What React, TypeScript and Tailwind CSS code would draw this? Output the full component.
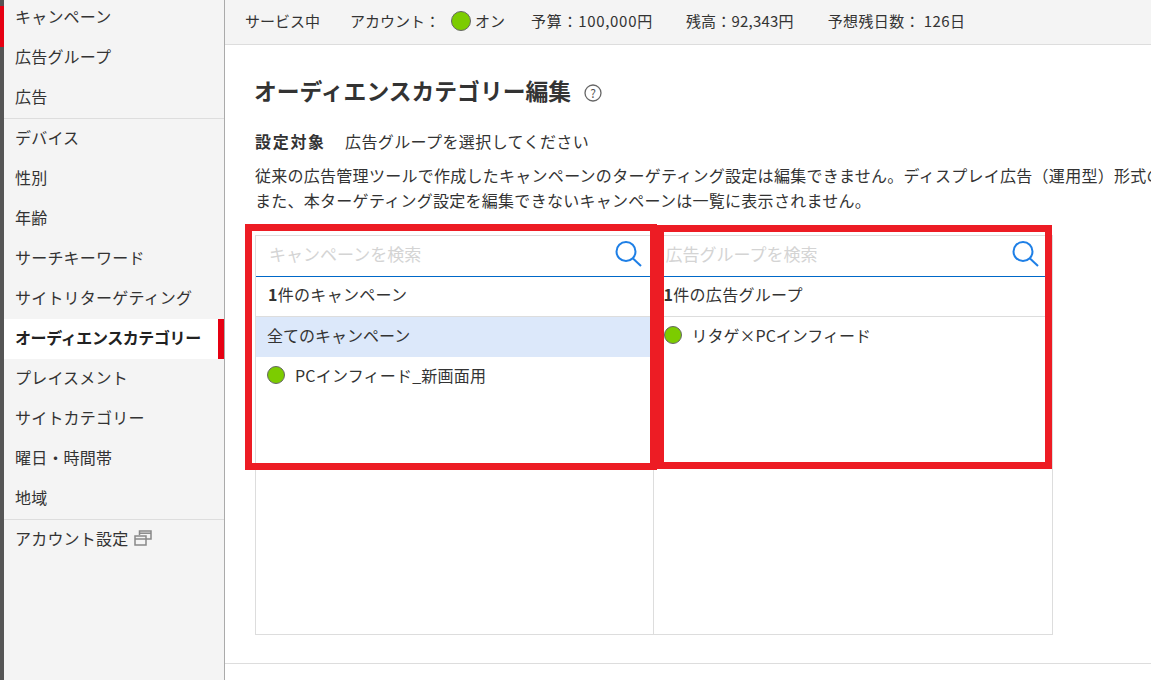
const font = { fontFamily: '"Noto Sans CJK JP", sans-serif' };

const groups = [
  ['キャンペーン', '広告グループ', '広告'],
  ['デバイス', '性別', '年齢', 'サーチキーワード', 'サイトリターゲティング', 'オーディエンスカテゴリー', 'プレイスメント', 'サイトカテゴリー', '曜日・時間帯', '地域'],
];

function Dot({ className }: { className: string }) {
  return <span className={`inline-block shrink-0 rounded-full border border-[#666] bg-[#7ccc00] ${className}`}></span>;
}

function SearchIcon() {
  return (
    <svg width="28" height="28" viewBox="0 0 28 28" fill="none" stroke="#1e7fe6" strokeWidth="2">
      <circle cx="12" cy="11.5" r="9.5" />
      <path d="M19 18.5 L27 26" />
    </svg>
  );
}

function WindowIcon() {
  return (
    <svg width="18" height="16" viewBox="0 0 18 16" fill="none" stroke="#888" strokeWidth="1.5">
      <path d="M5.5 5 V1 H17 V9 H12" />
      <path d="M5.5 3.2 H17" />
      <rect x="1" y="6" width="11" height="9" />
      <path d="M1 9 H12" />
    </svg>
  );
}

function Sidebar() {
  return (
    <aside className="w-[221px] shrink-0 border-r border-[#aaaaaa] bg-[#f4f4f4] text-[16px] tracking-[0.2px] text-[#333]">
      <div className="-mt-[2px]">
        {groups[0].map((label) => (
          <div key={label} className="flex h-10 items-center pb-[5px] pl-[11px]">{label}</div>
        ))}
      </div>
      <div className="border-t border-[#dddddd]">
        {groups[1].map((label) =>
          label === 'オーディエンスカテゴリー' ? (
            <div key={label} className="flex h-10 items-center border-r-[6px] border-[#e60012] bg-white pb-[4px] pl-[11px] font-bold tracking-[-0.4px] text-[#222]">
              {label}
            </div>
          ) : (
            <div key={label} className="flex h-10 items-center pb-[5px] pl-[11px]">{label}</div>
          ),
        )}
      </div>
      <div className="flex h-10 items-center gap-[6px] border-t border-[#dddddd] pb-[3px] pl-[11px]">
        アカウント設定
        <WindowIcon />
      </div>
    </aside>
  );
}

function Panel({ placeholder, count, children, searchPad, className }: { placeholder: string; count: string; children: React.ReactNode; searchPad: string; className: string }) {
  return (
    <div className={`flex flex-col ${className}`}>
      <div className={`flex h-10 items-center justify-between pb-[5px] ${searchPad}`}>
        <span className="text-[17px] text-[#d4d4d4]">{placeholder}</span>
        <SearchIcon />
      </div>
      <div className="h-[41px] border-y border-t-[#0068c8] border-b-[#dddddd] text-[16px] leading-[34px] tracking-[0.3px] text-[#333]">
        <div className={searchPad.includes('pl-[13px]') ? 'pl-[12px]' : 'pl-[10px]'}>
          <span className="font-bold">1</span>{count}
        </div>
      </div>
      {children}
    </div>
  );
}

export default function App() {
  return (
    <div className="relative flex h-[680px] w-[1151px] overflow-hidden bg-white" style={font}>
      <div className="w-1 shrink-0 bg-[#555555]">
        <div className="mt-[6px] h-[41px] bg-[#e60012]"></div>
      </div>
      <Sidebar />
      <main className="min-w-0 flex-1">
        <header className="flex h-[45px] items-center whitespace-nowrap border-b border-[#dddddd] bg-[#f4f4f4] pb-[2px] pl-5 text-[15px] text-[#333]">
          <span>サービス中</span>
          <span className="ml-[30px]">アカウント：</span>
          <Dot className="ml-[11px] h-5 w-5" />
          <span className="ml-[4px]">オン</span>
          <span className="ml-[26px] tracking-[0.7px]">予算：100,000円</span>
          <span className="ml-[33px] tracking-[0.2px]">残高：92,343円</span>
          <span className="ml-[34px] tracking-[0.4px]">予想残日数： 126日</span>
        </header>
        <div className="h-[619px] border-b border-[#dddddd] pl-[30px] pt-[28px]">
          <div className="flex h-[36px] items-center gap-[13px]">
            <h1 className="-ml-[1px] text-[22.8px] font-bold text-[#333]">オーディエンスカテゴリー編集</h1>
            <svg className="mt-1" width="18" height="18" viewBox="0 0 18 18" fill="none" stroke="#666" strokeWidth="1.3">
              <circle cx="9" cy="9" r="8" />
              <text x="9" y="13.5" textAnchor="middle" fontSize="12" fill="#555" stroke="none">?</text>
            </svg>
          </div>
          <div className="mt-[20px] flex h-6 items-center text-[16px] text-[#333]">
            <span className="w-[90px] font-bold tracking-[1.7px]">設定対象</span>
            <span className="tracking-[0.4px]">広告グループを選択してください</span>
          </div>
          <div className="mt-[10px] overflow-hidden whitespace-nowrap text-[16px] leading-[25px] tracking-[0.27px] text-[#333]">
            <p>従来の広告管理ツールで作成したキャンペーンのターゲティング設定は編集できません。ディスプレイ広告（運用型）形式の</p>
            <p>また、本ターゲティング設定を編集できないキャンペーンは一覧に表示されません。</p>
          </div>
          <div className="mt-[22px] flex h-[400px] w-[798px] border border-[#dddddd]">
            <Panel placeholder="キャンペーンを検索" count="件のキャンペーン" searchPad="pl-[13px] pr-[11px]" className="w-[398px] border-r border-[#dddddd]">
              <div className="flex h-10 items-center bg-[#dce8fa] pb-[4px] pl-[11px] text-[16px] text-[#333]">全てのキャンペーン</div>
              <div className="flex h-10 items-center pb-[4px] pl-[11px] text-[16px] tracking-[0.2px] text-[#333]">
                <Dot className="h-[18px] w-[18px]" />
                <span className="ml-[10px]">PCインフィード_新画面用</span>
              </div>
            </Panel>
            <Panel placeholder="広告グループを検索" count="件の広告グループ" searchPad="pl-[12px] pr-[13px]" className="w-[399px]">
              <div className="flex h-10 items-center pb-[4px] pl-[10px] text-[16px] text-[#333]">
                <Dot className="h-[18px] w-[18px]" />
                <span className="ml-[10px]">リタゲ×PCインフィード</span>
              </div>
            </Panel>
          </div>
        </div>
      </main>
      {/* red annotation boxes drawn over the screenshot */}
      <div className="absolute left-[245px] top-[224px] h-[246px] w-[412px] border-[7px] border-[#ed1c24]"></div>
      <div className="absolute left-[657px] top-[225px] h-[244px] w-[395px] border-[7px] border-[#ed1c24]"></div>
    </div>
  );
}
